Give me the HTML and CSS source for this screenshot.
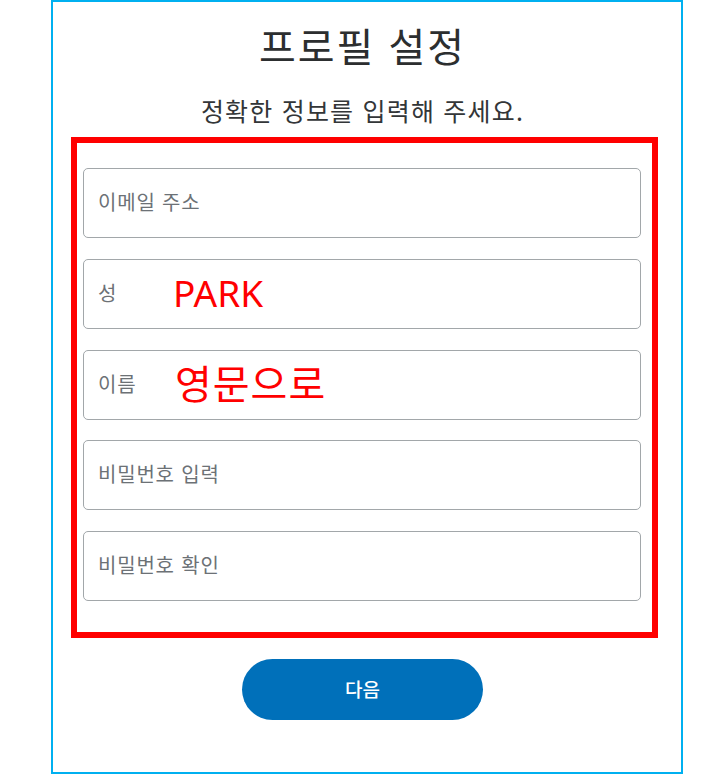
FILE: index.html
```html
<!DOCTYPE html>
<html lang="ko">
<head>
<meta charset="utf-8">
<title>프로필 설정</title>
<link rel="stylesheet" href="styles.css">
</head>
<body>
<div class="frame">
  <h1 class="title">프로필 설정</h1>
  <p class="subtitle">정확한 정보를 입력해 주세요.</p>
  <div class="highlight">
    <div class="field"><span class="ph">이메일 주소</span></div>
    <div class="field"><span class="ph">성</span><span class="note note-latin">PARK</span></div>
    <div class="field"><span class="ph">이름</span><span class="note note-ko">영문으로</span></div>
    <div class="field"><span class="ph">비밀번호 입력</span></div>
    <div class="field"><span class="ph">비밀번호 확인</span></div>
  </div>
  <div class="actions">
    <button class="btn" type="button">다음</button>
  </div>
</div>
</body>
</html>
```

FILE: styles.css
```css
html, body {
  margin: 0;
  padding: 0;
  background: #ffffff;
}
body {
  font-family: "Noto Sans CJK KR", "Noto Sans", sans-serif;
  width: 720px;
  height: 774px;
  overflow: hidden;
}
.frame {
  box-sizing: border-box;
  margin-left: 51px;
  width: 632px;
  height: 774px;
  border: 2px solid #00b0f0;
  padding: 21px 9px 0 0;
  display: flex;
  flex-direction: column;
}
.title {
  margin: 0;
  font-size: 40px;
  line-height: 44px;
  font-weight: 400;
  letter-spacing: 2px;
  color: #2c2e2f;
  text-align: center;
}
.subtitle {
  margin: 28px 0 0 0;
  font-size: 25px;
  line-height: 30px;
  letter-spacing: 1.2px;
  color: #333638;
  text-align: center;
}
.highlight {
  box-sizing: border-box;
  margin: 12px 0 0 18px;
  width: 587px;
  border: 6px solid #ff0000;
  padding: 25px 11px 31px 6px;
  display: flex;
  flex-direction: column;
  gap: 20.75px;
}
.field {
  position: relative;
  box-sizing: border-box;
  height: 70px;
  border: 1.5px solid #a2a7aa;
  border-radius: 5px;
  padding: 0 0 3px 14px;
  display: flex;
  align-items: center;
}
.ph {
  font-size: 20px;
  letter-spacing: 0.8px;
  color: #6c7176;
}
.note {
  position: absolute;
  color: #ff0000;
  line-height: 1;
}
.note-latin {
  font-family: "Noto Sans", sans-serif;
  font-size: 37px;
  left: 89px;
  top: 14px;
}
.note-ko {
  font-size: 40px;
  letter-spacing: 1px;
  left: 91px;
  top: 11px;
}
.actions {
  display: flex;
  justify-content: center;
  margin-top: 21px;
}
.btn {
  width: 241px;
  height: 61px;
  border: none;
  border-radius: 31px;
  background: #0070ba;
  color: #ffffff;
  font-family: "Noto Sans CJK KR", sans-serif;
  font-size: 19px;
  font-weight: 500;
  padding: 0 0 2px 0;
}
```
